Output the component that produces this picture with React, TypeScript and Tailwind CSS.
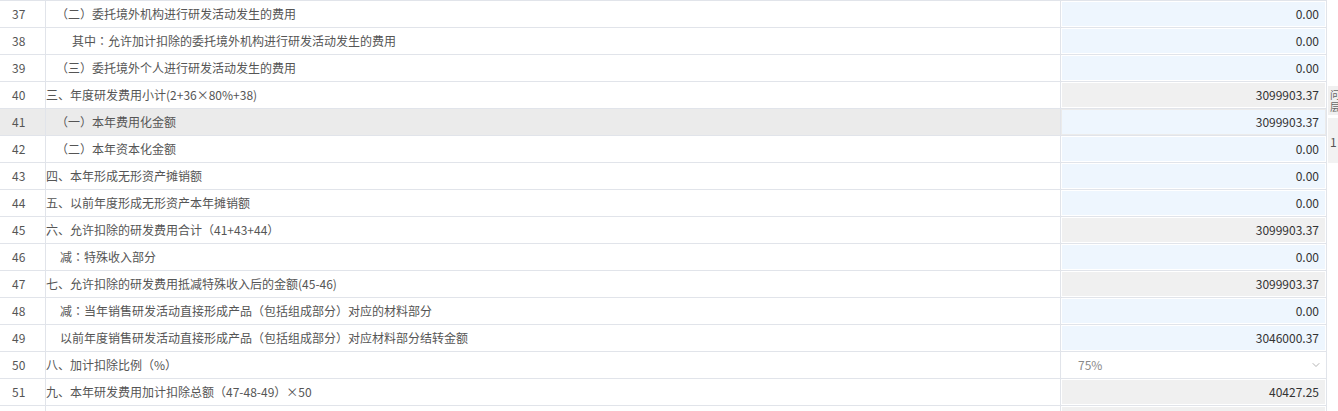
import React from 'react';
import { ChevronDown } from 'lucide-react';

// One line of the deduction form
interface Row {
  no: number | null;
  label: string;
  indent: 0 | 1 | 2 | 3;
  value: string;
  kind: 'input' | 'calc' | 'select';
  hover?: boolean;
}

const rows: Row[] = [
  { no: 37, label: '（二）委托境外机构进行研发活动发生的费用', indent: 1, value: '0.00', kind: 'input' },
  { no: 38, label: '其中：允许加计扣除的委托境外机构进行研发活动发生的费用', indent: 3, value: '0.00', kind: 'input' },
  { no: 39, label: '（三）委托境外个人进行研发活动发生的费用', indent: 1, value: '0.00', kind: 'input' },
  { no: 40, label: '三、年度研发费用小计(2+36×80%+38)', indent: 0, value: '3099903.37', kind: 'calc' },
  { no: 41, label: '（一）本年费用化金额', indent: 1, value: '3099903.37', kind: 'input', hover: true },
  { no: 42, label: '（二）本年资本化金额', indent: 1, value: '0.00', kind: 'input' },
  { no: 43, label: '四、本年形成无形资产摊销额', indent: 0, value: '0.00', kind: 'input' },
  { no: 44, label: '五、以前年度形成无形资产本年摊销额', indent: 0, value: '0.00', kind: 'input' },
  { no: 45, label: '六、允许扣除的研发费用合计（41+43+44）', indent: 0, value: '3099903.37', kind: 'calc' },
  { no: 46, label: '减：特殊收入部分', indent: 2, value: '0.00', kind: 'input' },
  { no: 47, label: '七、允许扣除的研发费用抵减特殊收入后的金额(45-46)', indent: 0, value: '3099903.37', kind: 'calc' },
  { no: 48, label: '减：当年销售研发活动直接形成产品（包括组成部分）对应的材料部分', indent: 2, value: '0.00', kind: 'input' },
  { no: 49, label: '以前年度销售研发活动直接形成产品（包括组成部分）对应材料部分结转金额', indent: 2, value: '3046000.37', kind: 'input' },
  { no: 50, label: '八、加计扣除比例（%）', indent: 0, value: '75%', kind: 'select' },
  { no: 51, label: '九、本年研发费用加计扣除总额（47-48-49）×50', indent: 0, value: '40427.25', kind: 'calc' },
  { no: null, label: '', indent: 0, value: '', kind: 'calc' },
];

const indentClass = ['pl-0', 'pl-[10px]', 'pl-[14px]', 'pl-[26px]'];

// full-width brackets and colons sit centred in the original font
const Label: React.FC<{ text: string }> = ({ text }) => (
  <>
    {text.split(/([（）：])/).map((part, i) =>
      /^[（）：]$/.test(part) ? (
        <span key={i} className="font-['Noto_Sans_CJK_TC']">{part}</span>
      ) : (
        <span key={i}>{part}</span>
      )
    )}
  </>
);

const ValueCell: React.FC<{ row: Row }> = ({ row }) => {
  if (row.kind === 'select') {
    return (
      <div className="h-full w-full bg-white flex items-center justify-between pl-[16px] pr-[3px] text-[#8a8a8a]">
        <span>{row.value}</span>
        <ChevronDown size={12} strokeWidth={1.6} className="text-[#a0a0a0]" />
      </div>
    );
  }
  return (
    <div
      className={`h-full w-full flex items-center justify-end pr-[6px] text-[#333] ${
        row.kind === 'calc' ? 'bg-[#f0f0f0]' : 'bg-[#eef6fe]'
      }`}
    >
      {row.value}
    </div>
  );
};

const App: React.FC = () => {
  return (
    <div
      className="relative h-[411px] w-[1338px] overflow-hidden bg-white text-[12px] leading-[16px]"
      style={{ fontFamily: '"Noto Sans CJK SC", "Noto Sans", sans-serif' }}
    >
      <div className="w-[1327px]">
        {rows.map((row, i) => (
          <div
            key={i}
            className={`flex h-[27px] border-t border-[#e1e4ea] ${row.hover ? 'bg-[#ebebeb]' : 'bg-white'}`}
          >
            <div className="w-[46px] shrink-0 border-r border-[#e1e4ea] flex items-center pl-[12px] text-[#555]">
              {row.no}
            </div>
            <div
              className={`w-[1015px] shrink-0 border-r border-[#e1e4ea] flex items-center whitespace-nowrap text-[#555] ${indentClass[row.indent]}`}
            >
              <Label text={row.label} />
            </div>
            <div className="w-[266px] shrink-0 border-r border-[#e1e4ea] p-[1px]">
              <ValueCell row={row} />
            </div>
          </div>
        ))}
      </div>

      {/* side panel peeking in from the right edge */}
      <div className="absolute left-[1328px] top-[86px] w-[10px] overflow-hidden flex flex-col gap-[3px] text-[#666]">
        <div className="h-[29px] bg-[#f0f0f0] pl-[2px] pt-[3px] text-[10px] leading-[12px]">
          <div>问</div>
          <div>层</div>
        </div>
        <div className="h-[45px] bg-[#f2f2f2] pl-[2px] pt-[17px] text-[12px] leading-[14px] text-[#555]">
          1
        </div>
      </div>
    </div>
  );
};

export default App;
